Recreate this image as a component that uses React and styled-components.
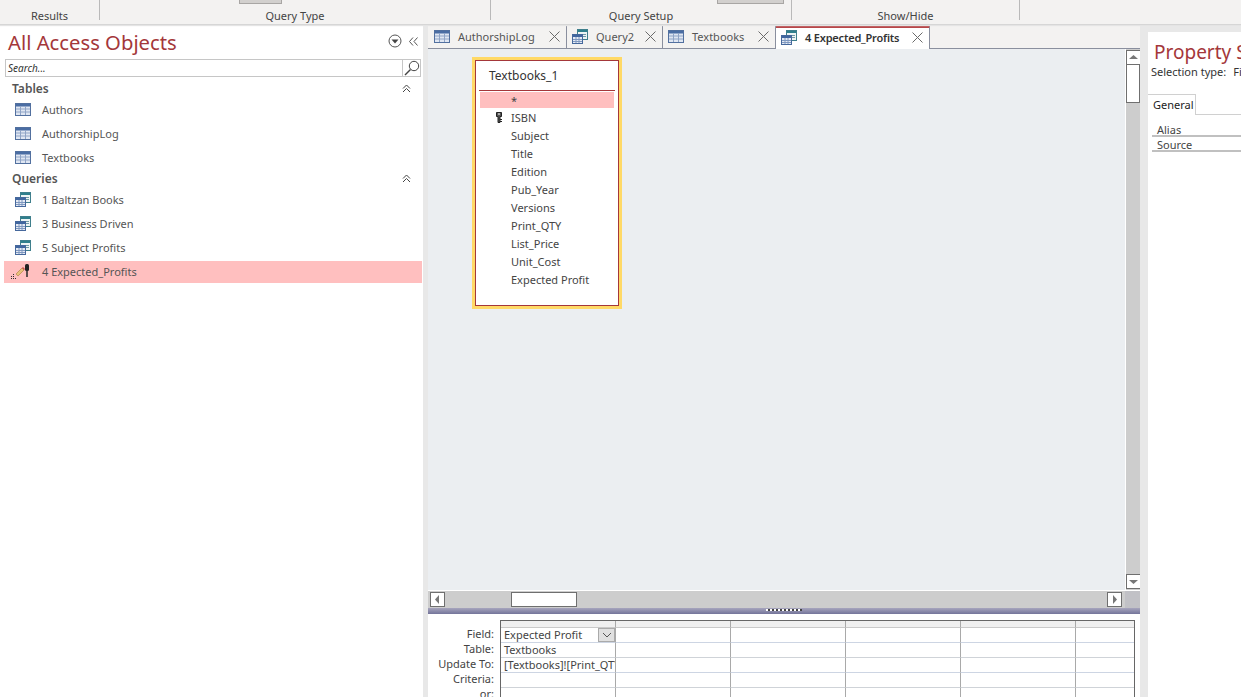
import React from "react";
import styled, { createGlobalStyle } from "styled-components";

const FONT = `"Noto Sans", "Open Sans", sans-serif`;

const tables = ["Authors", "AuthorshipLog", "Textbooks"];
const queries = ["1 Baltzan Books", "3 Business Driven", "5 Subject Profits"];
const fields = ["ISBN", "Subject", "Title", "Edition", "Pub_Year", "Versions", "Print_QTY", "List_Price", "Unit_Cost", "Expected Profit"];
const tabs = [
  { name: "AuthorshipLog", icon: "table", width: 139 },
  { name: "Query2", icon: "query", width: 96 },
  { name: "Textbooks", icon: "table", width: 113 },
  { name: "4 Expected_Profits", icon: "query", width: 154, active: true },
];
const gridLabels = ["Field:", "Table:", "Update To:", "Criteria:", "or:"];
const gridRows = [
  ["Expected Profit", true],
  ["Textbooks"],
  ["[Textbooks]![Print_QTY]*[List_Price]"],
  [""],
  [""],
];

function TableIcon() {
  return (
    <svg width="16" height="13" viewBox="0 0 16 13">
      <rect x="0.5" y="0.5" width="15" height="12" fill="#dfe6f2" stroke="#52709f" />
      <rect x="1" y="1" width="14" height="2.5" fill="#4a6da3" />
      <path d="M1 6h14M1 9h14M5.5 3v9M10.5 3v9" stroke="#8fa4c6" fill="none" />
    </svg>
  );
}

function QueryIcon() {
  return (
    <svg width="16" height="15" viewBox="0 0 16 15">
      <rect x="5.5" y="0.5" width="10" height="10" fill="#eef4f4" stroke="#3f7f8c" />
      <rect x="6" y="1" width="9" height="2" fill="#2f7f8c" />
      <path d="M11 5.5h3M11 7.5h3" stroke="#6f9aa5" />
      <rect x="0.5" y="5.5" width="10" height="9" fill="#e6ebf4" stroke="#46689c" />
      <rect x="1" y="6" width="9" height="2" fill="#41669f" />
      <path d="M1 10.5h9M1 12.5h9M4 8v6M7 8v6" stroke="#7f98c0" fill="none" />
    </svg>
  );
}

function KeyIcon() {
  return (
    <svg width="6" height="11" viewBox="0 0 6 11">
      <path d="M0.5 0.5h5v4h-1.5v6h-2v-6h-1.5z" fill="#555" stroke="#222" />
      <path d="M2 2h2" stroke="#fff" />
      <path d="M4 7.5h2M4 9.5h2" stroke="#222" />
    </svg>
  );
}

function DesignIcon() {
  return (
    <svg width="20" height="15" viewBox="0 0 20 15">
      <path d="M1 14.5h1M3 14.5h1M5 14.5h1M1 12.5h1M3 12.5h1M3 10.5h1" stroke="#333" />
      <path d="M6 10l6-6 2 2-6 6z" fill="#e7c07a" stroke="#a97c3a" strokeWidth="0.6" />
      <path d="M12 4l1-1 2 2-1 1z" fill="#c9504a" />
      <rect x="15" y="0" width="4" height="7" rx="1.5" fill="#222" />
      <rect x="16.2" y="7" width="1.6" height="6" fill="#333" />
    </svg>
  );
}

function CloseIcon() {
  return (
    <svg width="11" height="11" viewBox="0 0 11 11">
      <path d="M0.5 0.5l10 10M10.5 0.5l-10 10" stroke="#6a6a6a" fill="none" />
    </svg>
  );
}

function Arrow({ dir }) {
  const paths = {
    up: "M2 8h9L6.5 4z",
    down: "M2 5h9L6.5 9z",
    left: "M8 2v9L4 6.5z",
    right: "M5 2v9L9 6.5z",
  };
  return (
    <svg width="13" height="13" viewBox="0 0 13 13">
      <path d={paths[dir]} fill="#777" />
    </svg>
  );
}

function Chevrons() {
  return (
    <ChevronBox>
      <svg width="9" height="9" viewBox="0 0 9 9">
        <path d="M1 4.5l3.5-3.5 3.5 3.5M1 8l3.5-3.5L8 8" fill="none" stroke="#444" />
      </svg>
    </ChevronBox>
  );
}

export default function App() {
  return (
    <>
      <GlobalStyle />
      <Page>
        <Ribbon>
          <RibbonGroup $width={100}>Results</RibbonGroup>
          <RibbonGroup $width={391}>
            <RibbonStub $left={139} $width={43} />
            Query Type
          </RibbonGroup>
          <RibbonGroup $width={301}>
            <RibbonStub $left={226} $width={67} />
            Query Setup
          </RibbonGroup>
          <RibbonGroup $width={228}>Show/Hide</RibbonGroup>
        </Ribbon>
        <Body>
          <NavPane>
            <NavHeader>
              <NavTitle>All Access Objects</NavTitle>
              <NavTools>
                <svg width="14" height="14" viewBox="0 0 14 14">
                  <circle cx="7" cy="7" r="6" fill="none" stroke="#555" />
                  <path d="M3.5 5.5h7L7 9.5z" fill="#444" />
                </svg>
                <svg width="9" height="9" viewBox="0 0 9 9">
                  <path d="M4 0.5l-3.5 4 3.5 4M8.5 0.5l-3.5 4 3.5 4" fill="none" stroke="#555" />
                </svg>
              </NavTools>
            </NavHeader>
            <SearchBox>
              <SearchText>Search...</SearchText>
              <SearchButton>
                <svg width="17" height="16" viewBox="0 0 17 16">
                  <circle cx="11" cy="6" r="4.7" fill="none" stroke="#444" />
                  <path d="M7.5 9.5L2 15" stroke="#444" strokeWidth="1.4" />
                </svg>
              </SearchButton>
            </SearchBox>
            <SectionHead $first>
              Tables
              <Chevrons />
            </SectionHead>
            {tables.map((name) => (
              <NavItem key={name}>
                <NavIcon><TableIcon /></NavIcon>
                {name}
              </NavItem>
            ))}
            <SectionHead>
              Queries
              <Chevrons />
            </SectionHead>
            {queries.map((name) => (
              <NavItem key={name}>
                <NavIcon><QueryIcon /></NavIcon>
                {name}
              </NavItem>
            ))}
            <SelectedItem>
              <DesignSlot><DesignIcon /></DesignSlot>
              4 Expected_Profits
            </SelectedItem>
          </NavPane>
          <PaneSplitter />
          <DocArea>
            <TabBar>
              {tabs.map((tab) => (
                <Tab key={tab.name} $width={tab.width} $active={tab.active}>
                  {tab.icon === "table" ? <TableIcon /> : <QueryIcon />}
                  <TabName $active={tab.active}>{tab.name}</TabName>
                  <CloseIcon />
                </Tab>
              ))}
            </TabBar>
            <CanvasRow>
              <Canvas>
                <TableCard>
                  <CardInner>
                    <CardTitle>Textbooks_1</CardTitle>
                    <CardRule />
                    <StarRow>*</StarRow>
                    {fields.map((field, i) => (
                      <FieldRow key={field}>
                        {i === 0 && <KeySlot><KeyIcon /></KeySlot>}
                        {field}
                      </FieldRow>
                    ))}
                  </CardInner>
                </TableCard>
              </Canvas>
              <VScroll>
                <ScrollButton><Arrow dir="up" /></ScrollButton>
                <VThumb />
                <ScrollGap />
                <ScrollButton><Arrow dir="down" /></ScrollButton>
              </VScroll>
            </CanvasRow>
            <HScrollRow>
              <HScroll>
                <ScrollButton><Arrow dir="left" /></ScrollButton>
                <HThumb />
                <ScrollGap />
                <ScrollButton><Arrow dir="right" /></ScrollButton>
              </HScroll>
              <ScrollCorner />
            </HScrollRow>
            <GridSplitter>
              <Grip />
            </GridSplitter>
            <GridPane>
              <GridLabels>
                {gridLabels.map((label) => (
                  <GridLabel key={label}>{label}</GridLabel>
                ))}
              </GridLabels>
              <QueryGrid>
                {Array.from({ length: 6 }).map((_, i) => (
                  <GridHeadCell key={i} />
                ))}
                {gridRows.map(([value, combo], row) =>
                  Array.from({ length: 6 }).map((_, col) => (
                    <GridCell key={`${row}-${col}`} $odd={row % 2 === 0}>
                      {col === 0 && <CellText>{value}</CellText>}
                      {col === 0 && combo && (
                        <ComboButton>
                          <svg width="10" height="6" viewBox="0 0 10 6">
                            <path d="M1 1l4 4 4-4" fill="none" stroke="#555" />
                          </svg>
                        </ComboButton>
                      )}
                    </GridCell>
                  ))
                )}
              </QueryGrid>
            </GridPane>
          </DocArea>
          <PropGutter />
          <PropSheet>
            <PropTitle>Property Sheet</PropTitle>
            <SelectionType>
              <span>Selection type:</span>
              <span>Field Properties</span>
            </SelectionType>
            <PropTabs>
              <PropTab>General</PropTab>
            </PropTabs>
            <PropRows>
              <PropRow>Alias</PropRow>
              <PropRow>Source</PropRow>
            </PropRows>
          </PropSheet>
        </Body>
      </Page>
    </>
  );
}

const GlobalStyle = createGlobalStyle`
  html, body {
    margin: 0;
    padding: 0;
    height: 100%;
    overflow: hidden;
    background: #fff;
  }
  body {
    font-family: ${FONT};
    font-size: 11px;
    color: #444;
  }
`;

const Page = styled.div`
  width: 1241px;
  height: 697px;
  display: flex;
  flex-direction: column;
  overflow: hidden;
`;

const Ribbon = styled.div`
  height: 24px;
  flex: none;
  display: flex;
  background: #f3f2f1;
  border-bottom: 1px solid #d6d6d6;
  box-shadow: 0 1px 1px #e4e4e4;
  position: relative;
  z-index: 1;
`;

const RibbonGroup = styled.div`
  position: relative;
  width: ${(p) => p.$width}px;
  height: 20px;
  box-sizing: border-box;
  padding-top: 7px;
  border-right: 1px solid #b9b9b9;
  text-align: center;
  font-size: 11px;
  line-height: 18px;
  color: #444;
`;

const RibbonStub = styled.div`
  position: absolute;
  top: 0;
  left: ${(p) => p.$left}px;
  width: ${(p) => p.$width}px;
  height: 4px;
  box-sizing: border-box;
  background: #d2d0ce;
  border: 1px solid #a8a6a4;
  border-top: none;
`;

const Body = styled.div`
  flex: 1;
  display: flex;
  min-height: 0;
  background: #e8e8e8;
`;

const NavPane = styled.div`
  width: 423px;
  flex: none;
  box-sizing: border-box;
  padding: 0 1px 0 4px;
  background: #fff;
`;

const NavHeader = styled.div`
  height: 34px;
  display: flex;
  align-items: center;
  justify-content: space-between;
`;

const NavTitle = styled.div`
  padding: 1px 0 0 4px;
  font-size: 20.25px;
  line-height: 33px;
  color: #a4373a;
`;

const NavTools = styled.div`
  display: flex;
  align-items: center;
  gap: 7px;
  padding: 0 4px 2px 0;
`;

const SearchBox = styled.div`
  height: 18px;
  margin: 0 1px;
  display: flex;
  box-sizing: border-box;
  border: 1px solid #c6c6c6;
`;

const SearchText = styled.div`
  flex: 1;
  padding-left: 2px;
  font-size: 10px;
  font-style: italic;
  line-height: 16px;
  color: #333;
`;

const SearchButton = styled.div`
  width: 17px;
  border-left: 1px solid #c6c6c6;
  display: flex;
  align-items: center;
  justify-content: center;
`;

const SectionHead = styled.div`
  height: ${(p) => (p.$first ? 20 : 18)}px;
  box-sizing: border-box;
  padding: ${(p) => (p.$first ? "2px" : "0")} 0 0 8px;
  display: flex;
  align-items: center;
  justify-content: space-between;
  font-size: 12px;
  font-weight: 600;
  color: #555;
`;

const ChevronBox = styled.span`
  display: flex;
  padding-right: 11px;
`;

const NavItem = styled.div`
  height: 24px;
  display: flex;
  align-items: center;
  font-size: 11px;
  color: #555;
`;

const SelectedItem = styled.div`
  height: 22px;
  margin-top: 2px;
  box-sizing: border-box;
  padding-bottom: 2px;
  display: flex;
  align-items: center;
  font-size: 11px;
  color: #555;
  background: #ffbfbf;
`;

const NavIcon = styled.span`
  width: 27px;
  padding-left: 11px;
  flex: none;
  display: flex;
`;

const DesignSlot = styled.span`
  width: 32px;
  padding-left: 6px;
  flex: none;
  display: flex;
`;

const PaneSplitter = styled.div`
  width: 5px;
  flex: none;
  background: #e8e8e8;
`;

const DocArea = styled.div`
  width: 712px;
  flex: none;
  display: flex;
  flex-direction: column;
`;

const TabBar = styled.div`
  height: 24px;
  flex: none;
  display: flex;
  box-sizing: border-box;
  background: #f3f2f1;
  border-bottom: 1px solid #8a8f9e;
`;

const Tab = styled.div`
  width: ${(p) => p.$width}px;
  height: ${(p) => (p.$active ? 24 : 23)}px;
  flex: none;
  display: flex;
  align-items: center;
  box-sizing: border-box;
  padding: ${(p) => (p.$active ? "0 6px 2px 5px" : "0 6px 0 5px")};
  border-right: 1px solid #8a8f9e;
  background: ${(p) => (p.$active ? "#fff" : "transparent")};
  border-top: ${(p) => (p.$active ? "3px solid #b7474a" : "none")};
  &:first-child {
    padding-left: 6px;
  }
`;

const TabName = styled.span`
  flex: 1;
  padding-left: 8px;
  font-size: 11px;
  font-weight: ${(p) => (p.$active ? 600 : 400)};
  letter-spacing: ${(p) => (p.$active ? "-0.2px" : "0")};
  color: ${(p) => (p.$active ? "#333" : "#555")};
`;

const CanvasRow = styled.div`
  height: 541px;
  flex: none;
  display: flex;
`;

const Canvas = styled.div`
  flex: 1;
  padding: 8px 0 0 44px;
  background: #ebeef1;
`;

const TableCard = styled.div`
  width: 150px;
  height: 252px;
  box-sizing: border-box;
  border: 3px solid #ffd966;
`;

const CardInner = styled.div`
  height: 100%;
  box-sizing: border-box;
  padding: 0 3px;
  background: #fff;
  border: 1px solid #a4373a;
`;

const CardTitle = styled.div`
  height: 29px;
  padding-left: 10px;
  font-size: 12px;
  line-height: 29px;
  color: #333;
`;

const CardRule = styled.div`
  margin-bottom: 1px;
  height: 1px;
  background: #a4373a;
`;

const StarRow = styled.div`
  height: 16px;
  margin: 0 1px 1px;
  padding-left: 31px;
  background: #ffbfbf;
  font-size: 11px;
  line-height: 18px;
  color: #444;
`;

const FieldRow = styled.div`
  position: relative;
  height: 18px;
  padding-left: 32px;
  font-size: 11px;
  line-height: 18px;
  color: #444;
`;

const KeySlot = styled.span`
  position: absolute;
  left: 17px;
  top: 3px;
  display: flex;
`;

const VScroll = styled.div`
  width: 15px;
  flex: none;
  display: flex;
  flex-direction: column;
  padding: 1px 0;
  box-sizing: border-box;
  background: #cdcdcd;
  border-left: 1px solid #fff;
`;

const ScrollButton = styled.div`
  width: 15px;
  height: 15px;
  flex: none;
  box-sizing: border-box;
  background: #fff;
  border: 1px solid #6f6f6f;
  display: flex;
  align-items: center;
  justify-content: center;
`;

const VThumb = styled.div`
  height: 38px;
  flex: none;
  box-sizing: border-box;
  background: #fff;
  border: 1px solid #6f6f6f;
  border-top: none;
`;

const ScrollGap = styled.div`
  flex: 1;
`;

const HScrollRow = styled.div`
  height: 18px;
  flex: none;
  display: flex;
  border-top: 1px solid #fff;
  box-sizing: border-box;
`;

const HScroll = styled.div`
  flex: 1;
  display: flex;
  align-items: center;
  padding: 0 3px 0 2px;
  background: #cdcdcd;
`;

const HThumb = styled.div`
  width: 66px;
  height: 15px;
  margin-left: 66px;
  flex: none;
  box-sizing: border-box;
  background: #fff;
  border: 1px solid #6f6f6f;
`;

const ScrollCorner = styled.div`
  width: 15px;
  flex: none;
  background: #c1c1c6;
`;

const GridSplitter = styled.div`
  height: 6px;
  flex: none;
  display: flex;
  justify-content: center;
  background: linear-gradient(#a7a5bd, #74749a);
`;

const Grip = styled.div`
  width: 36px;
  height: 2px;
  margin-top: 1px;
  background: repeating-linear-gradient(90deg, #fff 0 2px, #444 2px 4px);
`;

const GridPane = styled.div`
  flex: 1;
  min-height: 0;
  display: flex;
  padding: 6px 5px 0 0;
  background: #fff;
  overflow: hidden;
`;

const GridLabels = styled.div`
  width: 72px;
  flex: none;
  padding-top: 6px;
`;

const GridLabel = styled.div`
  height: 15px;
  padding-right: 6px;
  text-align: right;
  font-size: 11px;
  line-height: 15px;
  color: #444;
`;

const QueryGrid = styled.div`
  flex: 1;
  display: grid;
  grid-template-columns: repeat(5, 115px) 1fr;
  grid-auto-rows: min-content;
  align-content: start;
  border: 1px solid #666;
  border-bottom: none;
`;

const GridHeadCell = styled.div`
  height: 7px;
  box-sizing: border-box;
  background: #efefef;
  border-bottom: 1px solid #c9c9c9;
  border-right: 1px solid #a9a9a9;
  &:nth-child(6) {
    border-right: none;
  }
`;

const GridCell = styled.div`
  position: relative;
  height: 15px;
  box-sizing: border-box;
  overflow: hidden;
  border-bottom: 1px solid ${(p) => (p.$odd ? "#cdd5e3" : "#cfd3d8")};
  border-right: 1px solid #a9a9a9;
  &:nth-child(6n) {
    border-right: none;
  }
`;

const CellText = styled.span`
  display: block;
  padding-left: 3px;
  font-size: 11px;
  line-height: 13px;
  color: #444;
  white-space: nowrap;
`;

const ComboButton = styled.div`
  position: absolute;
  top: 0;
  right: 0;
  width: 17px;
  height: 14px;
  box-sizing: border-box;
  background: #e0e0e0;
  border: 1px solid #aaa;
  display: flex;
  align-items: center;
  justify-content: center;
`;

const PropGutter = styled.div`
  width: 8px;
  flex: none;
  background: #e8e8e8;
`;

const PropSheet = styled.div`
  flex: 1;
  min-width: 0;
  margin-top: 7px;
  padding-top: 7px;
  overflow: hidden;
  white-space: nowrap;
  background: #fff;
`;

const PropTitle = styled.div`
  padding-left: 6px;
  font-size: 19px;
  line-height: 26px;
  color: #a4373a;
`;

const SelectionType = styled.div`
  display: flex;
  gap: 7px;
  padding-left: 3px;
  font-size: 11px;
  line-height: 14px;
  color: #333;
`;

const PropTabs = styled.div`
  margin-top: 15px;
  height: 20px;
  border-bottom: 1px solid #d0d0d0;
  display: flex;
`;

const PropTab = styled.div`
  width: 48px;
  box-sizing: border-box;
  padding-left: 5px;
  height: 21px;
  background: #fff;
  border-top: 1px solid #d0d0d0;
  border-right: 1px solid #d0d0d0;
  font-size: 11px;
  line-height: 20px;
  color: #222;
`;

const PropRows = styled.div`
  margin: 7px 0 0 4px;
`;

const PropRow = styled.div`
  height: 15px;
  padding-left: 5px;
  box-sizing: border-box;
  border-bottom: 2px solid #c0c0c0;
  font-size: 11px;
  line-height: 15px;
  color: #444;
`;
